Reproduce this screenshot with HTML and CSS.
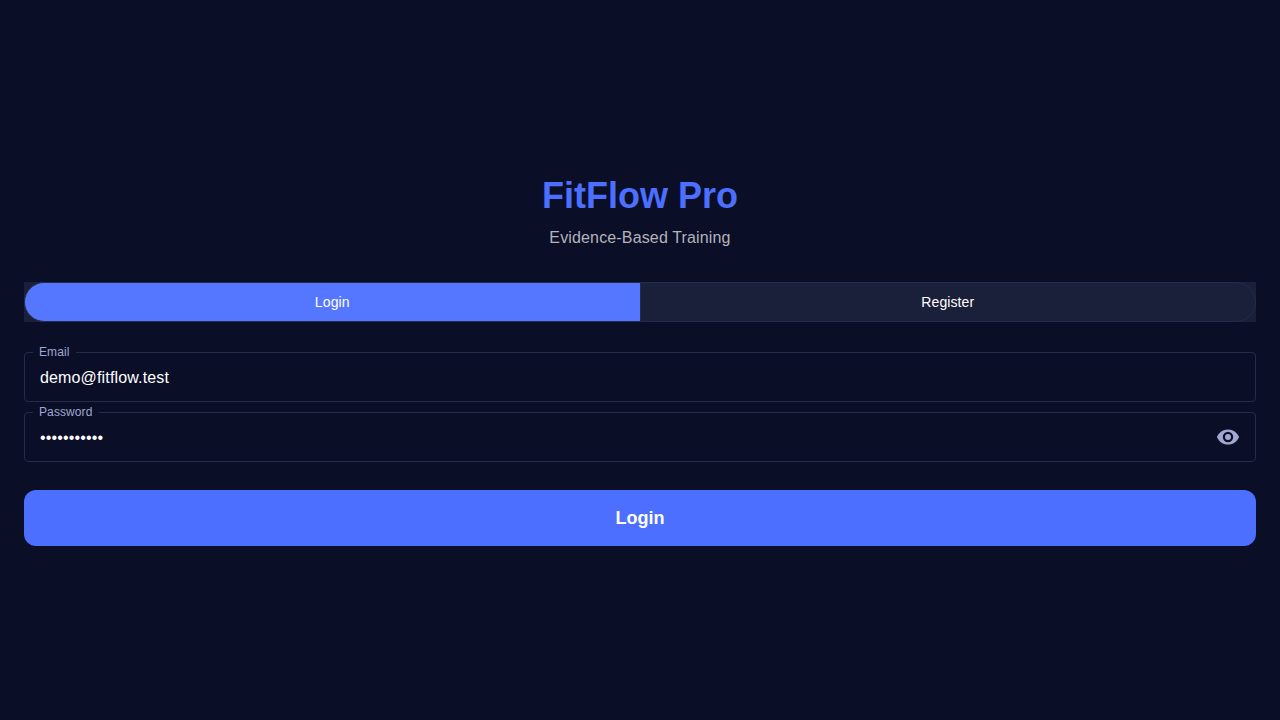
FILE: index.html
```html
<!DOCTYPE html>
<html lang="en">
<head>
<meta charset="utf-8">
<meta name="viewport" content="width=device-width, initial-scale=1">
<title>FitFlow Pro</title>
<link rel="stylesheet" href="styles.css">
</head>
<body>
<main class="auth">
  <header class="brand">
    <h1 class="brand-title">FitFlow Pro</h1>
    <p class="brand-tagline">Evidence-Based Training</p>
  </header>
  <div class="switcher">
    <button class="segment segment-first segment-active" type="button" aria-pressed="true">Login</button>
    <button class="segment segment-last" type="button" aria-pressed="false">Register</button>
  </div>
  <form class="form">
    <fieldset class="field">
      <legend class="field-legend"><label for="email">Email</label></legend>
      <input class="field-input" id="email" type="email" value="demo@fitflow.test">
    </fieldset>
    <fieldset class="field">
      <legend class="field-legend"><label for="password">Password</label></legend>
      <input class="field-input" id="password" type="password" value="fitflow2024">
      <button class="reveal" type="button" aria-label="Show password">
        <svg class="reveal-icon" viewBox="0 0 24 24" aria-hidden="true"><path d="M12 9a3 3 0 1 0 0 6 3 3 0 0 0 0-6m0 8.200a5.200 5.200 0 0 1 0-10.400 5.200 5.200 0 0 1 0 10.400m0-12.800C7 4.400 2.700 7.500 .9 12c1.800 4.500 6.100 7.600 11.100 7.600s9.300-3.100 11.100-7.600C21.300 7.500 17 4.400 12 4.400z"/></svg>
      </button>
    </fieldset>
    <button class="submit" type="submit">Login</button>
  </form>
</main>
</body>
</html>
```
FILE: styles.css
```css
* {
  box-sizing: border-box;
}

body {
  margin: 0;
  min-height: 100vh;
  display: flex;
  flex-direction: column;
  justify-content: center;
  background: #0a0e27;
  color: #ffffff;
  font-family: "Liberation Sans", Arial, sans-serif;
}

button,
input {
  font-family: inherit;
  color: inherit;
}

button {
  cursor: pointer;
}

.auth {
  padding: 24px;
}

.brand {
  margin-bottom: 32px;
  text-align: center;
}

.brand-title {
  margin: 0 0 8px;
  color: #4c6fff;
  font-size: 36px;
  line-height: 44px;
}

.brand-tagline {
  margin: 0;
  color: #b4b4b9;
  font-size: 16px;
  line-height: 24px;
  letter-spacing: 0.15px;
}

.switcher {
  display: flex;
  margin-bottom: 24px;
  background: #1a1f3a;
}

.segment {
  flex: 1;
  height: 40px;
  padding: 0 16px;
  border: 1px solid #252b4a;
  background: transparent;
  font-size: 14px;
  line-height: 20px;
  letter-spacing: 0.1px;
}

.segment-first {
  border-right: 0;
  border-radius: 20px 0 0 20px;
}

.segment-last {
  border-radius: 0 20px 20px 0;
}

.segment-active {
  background: #5577ff;
}

.form {
  display: flex;
  flex-direction: column;
}

.field {
  display: flex;
  align-items: center;
  min-width: 0;
  height: 56px;
  margin: 0 0 4px;
  padding: 2px 15px 0;
  border: 1px solid #252b4a;
  border-radius: 4px;
}

.field-legend {
  margin-left: -7px;
  padding: 0 6px;
  color: #a0a8d0;
  font-size: 12px;
  line-height: 12px;
  letter-spacing: 0.1px;
}

.field-input {
  flex: 1;
  min-width: 0;
  height: 36px;
  padding: 0;
  border: 0;
  outline: 0;
  background: transparent;
  font-size: 16px;
  letter-spacing: 0.15px;
}

.reveal {
  display: flex;
  padding: 0 0 2px;
  border: 0;
  background: transparent;
  color: #a0a8d0;
}

.reveal-icon {
  width: 24px;
  height: 24px;
  fill: currentColor;
}

.submit {
  height: 56px;
  margin-top: 24px;
  border: 0;
  border-radius: 12px;
  background: #4c6fff;
  font-size: 18px;
  font-weight: 700;
}
```
